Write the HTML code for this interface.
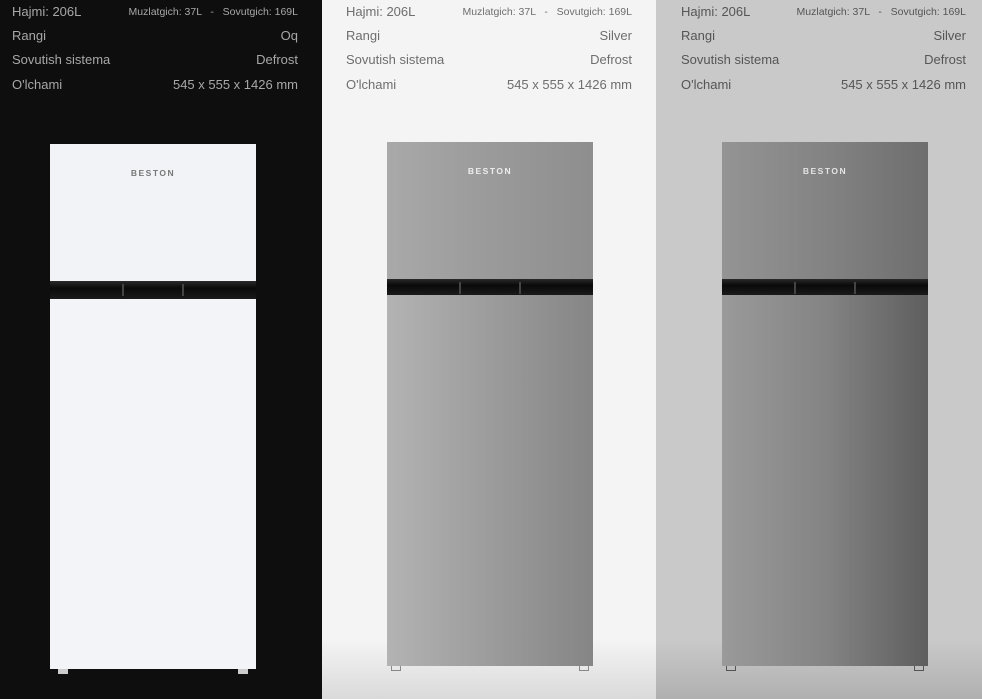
<!DOCTYPE html>
<html><head><meta charset="utf-8"><style>
*{margin:0;padding:0;box-sizing:border-box}
body{width:982px;height:699px;overflow:hidden;position:relative;font-family:"Liberation Sans",sans-serif}
.p{position:absolute;top:0;height:699px;overflow:hidden}
.p1{left:0;width:322px;background:#0e0e0e;color:#a8a8a8}
.p2{left:322px;width:334px;background:linear-gradient(#f4f4f4 0,#f4f4f4 640px,#dadada 699px);color:#6e6e6e}
.p3{left:656px;width:326px;background:linear-gradient(#c9c9c9 0,#c9c9c9 640px,#b0b0b0 699px);color:#555}
.row{position:absolute;font-size:13px;display:flex;justify-content:space-between;align-items:baseline}
.row small{font-size:10.5px;position:relative;top:-1px}
.f{position:absolute;width:206px}
.fr{position:absolute;left:0;width:100%}
.logo{position:absolute;top:24px;width:100%;text-align:center;font-size:8.5px;font-weight:bold;letter-spacing:1.5px}
.band{background:linear-gradient(#2a2a2a,#0a0a0a 40%,#1a1a1a)}
.n{position:absolute;top:3px;width:2px;height:12px;background:#444}
.ft{position:absolute;bottom:-5px;width:10px;height:5px;border:1.5px solid #888;border-top:none}
</style></head><body>
<div class="p p1">
 <div class="row" style="left:12px;right:24px;top:4px"><span>Hajmi: 206L</span><small>Muzlatgich: 37L &nbsp;&nbsp;-&nbsp;&nbsp; Sovutgich: 169L</small></div>
 <div class="row" style="left:12px;right:24px;top:28px"><span>Rangi</span><span>Oq</span></div>
 <div class="row" style="left:12px;right:24px;top:52px"><span>Sovutish sistema</span><span>Defrost</span></div>
 <div class="row" style="left:12px;right:24px;top:77px"><span>O'lchami</span><span>545 x 555 x 1426 mm</span></div>
 <div class="f" style="left:50px;top:144px;height:525px">
  <div class="fr" style="top:0;height:137px;background:#f1f3f7"><div class="logo" style="color:#777">BESTON</div></div>
  <div class="fr band" style="top:137px;height:18px"><div class="n" style="left:72px"></div><div class="n" style="left:132px"></div></div>
  <div class="fr" style="top:155px;height:370px;background:#f2f4f8"></div>
  <div class="ft" style="left:8px;border-color:#ccc;background:#ccc"></div><div class="ft" style="right:8px;border-color:#ccc;background:#ccc"></div>
 </div>
</div>
<div class="p p2">
 <div class="row" style="left:24px;right:24px;top:4px"><span>Hajmi: 206L</span><small>Muzlatgich: 37L &nbsp;&nbsp;-&nbsp;&nbsp; Sovutgich: 169L</small></div>
 <div class="row" style="left:24px;right:24px;top:28px"><span>Rangi</span><span>Silver</span></div>
 <div class="row" style="left:24px;right:24px;top:52px"><span>Sovutish sistema</span><span>Defrost</span></div>
 <div class="row" style="left:24px;right:24px;top:77px"><span>O'lchami</span><span>545 x 555 x 1426 mm</span></div>
 <div class="f" style="left:65px;top:142px;height:524px">
  <div class="fr" style="top:0;height:137px;background:linear-gradient(90deg,#a9a9a9,#9a9a9a 50%,#8e8e8e)"><div class="logo" style="color:#eee">BESTON</div></div>
  <div class="fr band" style="top:137px;height:16px"><div class="n" style="left:72px"></div><div class="n" style="left:132px"></div></div>
  <div class="fr" style="top:153px;height:371px;background:linear-gradient(90deg,#b3b3b3,#9c9c9c 50%,#858585)"></div>
  <div class="ft" style="left:4px"></div><div class="ft" style="right:4px"></div>
 </div>
</div>
<div class="p p3">
 <div class="row" style="left:25px;right:16px;top:4px"><span>Hajmi: 206L</span><small>Muzlatgich: 37L &nbsp;&nbsp;-&nbsp;&nbsp; Sovutgich: 169L</small></div>
 <div class="row" style="left:25px;right:16px;top:28px"><span>Rangi</span><span>Silver</span></div>
 <div class="row" style="left:25px;right:16px;top:52px"><span>Sovutish sistema</span><span>Defrost</span></div>
 <div class="row" style="left:25px;right:16px;top:77px"><span>O'lchami</span><span>545 x 555 x 1426 mm</span></div>
 <div class="f" style="left:66px;top:142px;height:524px">
  <div class="fr" style="top:0;height:137px;background:linear-gradient(90deg,#949494,#838383 50%,#6e6e6e)"><div class="logo" style="color:#e4e4e4">BESTON</div></div>
  <div class="fr band" style="top:137px;height:16px"><div class="n" style="left:72px"></div><div class="n" style="left:132px"></div></div>
  <div class="fr" style="top:153px;height:371px;background:linear-gradient(90deg,#9a9a9a,#848484 50%,#5e5e5e)"></div>
  <div class="ft" style="left:4px;border-color:#555"></div><div class="ft" style="right:4px;border-color:#555"></div>
 </div>
</div>
</body></html>
